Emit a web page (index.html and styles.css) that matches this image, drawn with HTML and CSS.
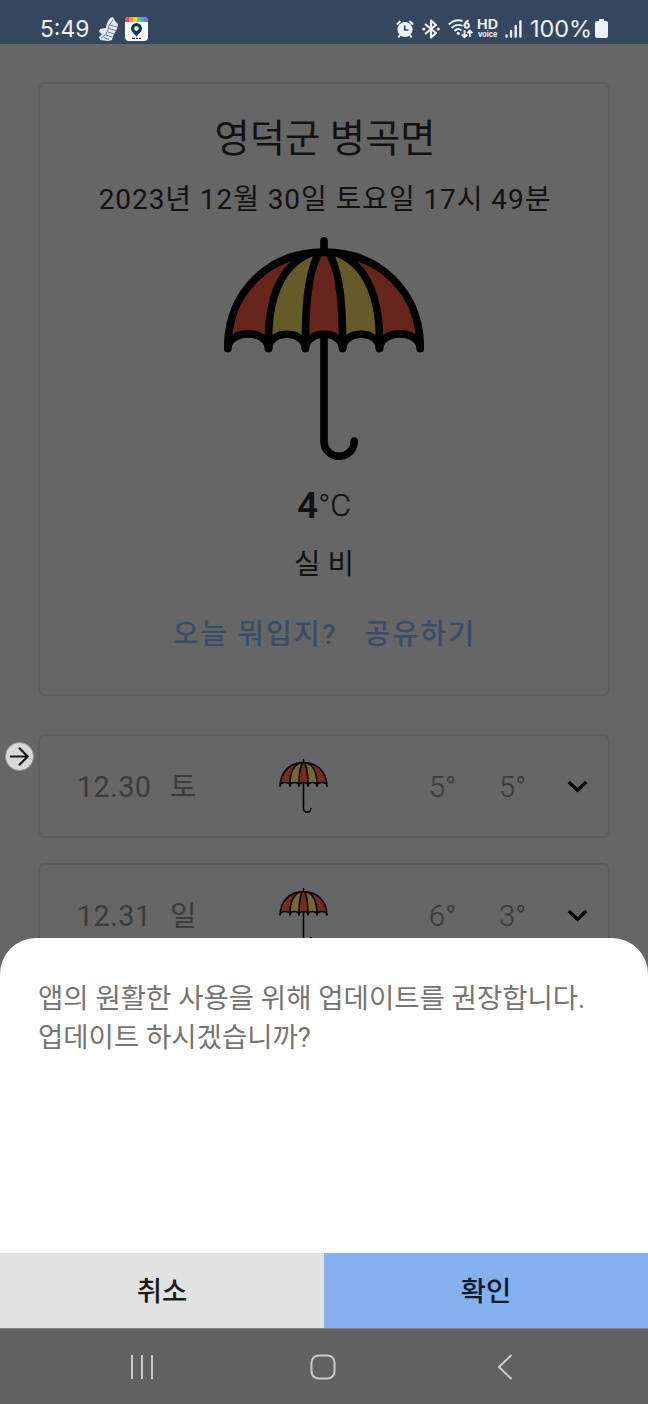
FILE: index.html
```html
<!DOCTYPE html>
<html lang="ko">
<head>
<meta charset="utf-8">
<title>날씨</title>
<link rel="stylesheet" href="styles.css">
</head>
<body>
<svg class="defs" width="0" height="0">
  <symbol id="umbrella" viewBox="71 50 602 670">
    <path class="red" d="M84 345C100 180 220 97 372 97C524 97 644 180 660 345Q600 335 540 350Q484 325 428 350Q372 325 316 350Q260 325 205 350Q145 320 84 345Z"/>
    <path class="yellow" d="M205 350C205 230 240 145 330 103L350 108C325 170 316 250 316 350Q260 325 205 350Z"/>
    <path class="yellow" d="M539 350C539 230 504 145 414 103L394 108C419 170 428 250 428 350Q484 325 539 350Z"/>
    <path class="stroke" d="M372 61V96M82 385C82 215 205 95 372 95S662 215 662 385M205 385C201 240 240 140 325 101M316 385C316 250 324 160 354 103M428 385C428 250 420 160 390 103M539 385C543 240 504 140 419 101"/>
    <path class="stroke" d="M82 385C85 328 201 325 205 385C207 328 313 328 316 385C319 328 425 328 428 385C431 328 537 328 539 385C543 325 659 328 662 385M372 345V664A45 45 0 0 0 463 664"/>
  </symbol>
  <symbol id="chevron" viewBox="0 0 20 13"><path d="M1.200 2 10 10.200 18.800 2" fill="none" stroke="#000" stroke-width="3.300"/></symbol>
</svg>
<div class="screen">
  <header class="status">
    <div class="status-left">
      <span class="clock">5:49</span>
      <svg class="shoe" viewBox="0 0 19 24"><path d="M11 1 14 0 16 4 19 7 18 12 14 19 13 23 9 24 1 23 0 20 3 17 0 15 1 12 7 11 8 6Z" fill="#e4eaf2"/><path d="M14 3Q9 8 9 13Q8 18 2 21M11 8 18 10M10 11.500 17 13.500M9 15 15 17M7 18 13 20M5 20.500 10 22.500" fill="none" stroke="#6b7a90" stroke-width="1"/></svg>
      <svg class="app" viewBox="0 0 23 24"><rect width="23" height="24" rx="4" fill="#fbfcfd"/><path d="M0 5V4Q0 0 4 0H5V5Z" fill="#e7514b"/><path d="M4 0H8V5H4Z" fill="#f6914d"/><path d="M8 0H12V5H8Z" fill="#e9d34f"/><path d="M12 0H16V5H12Z" fill="#62c97b"/><path d="M16 0H19V5H16Z" fill="#5899ec"/><path d="M19 0Q23 0 23 4V5H19Z" fill="#8d70e8"/><path d="M11.500 19.500 7.300 15A5.500 5.500 0 1 1 15.700 15Z" fill="#123a56"/><circle cx="11.500" cy="11.500" r="2.200" fill="#fff"/><path d="M7 21.300H10M11 21.300H13M14 21.300H16" stroke="#333" stroke-width="1.300"/></svg>
    </div>
    <div class="status-right">
      <svg class="alarm" viewBox="0 0 18 18"><circle cx="9" cy="9.500" r="7.600" fill="#edf2f8"/><path d="M.8 4.700 4.500 1M17.200 4.700 13.500 1M4 15 2.300 17.500M14 15 15.700 17.500" stroke="#edf2f8" stroke-width="2" fill="none"/><path d="M8.700 5.500V10H12.500" stroke="#35475f" stroke-width="1.600" fill="none"/></svg>
      <svg class="bluetooth" viewBox="0 0 18 20"><path d="M3 5 14 14 9 18.500V1.500L14 6 3 15" fill="none" stroke="#edf2f8" stroke-width="2.200" stroke-linejoin="round"/><circle cx="1.800" cy="10" r="1.600" fill="#edf2f8"/><circle cx="16.200" cy="10" r="1.600" fill="#edf2f8"/></svg>
      <svg class="wifi" viewBox="0 0 25 20"><g fill="none" stroke="#edf2f8" stroke-width="1.900"><path d="M.8 5.500Q7.500-.5 14.500 2M3.500 9Q9 4 14.500 7M6.500 12Q10 8.500 13.500 11.500"/><path d="M20.500 1.500Q16.500 3 16.500 7"/><circle cx="18.700" cy="6.500" r="2.200"/><path d="M16.500 11V18M13.800 15.500 16.500 18.200 19.200 15.500M21.800 18V12M19.200 14.200 21.800 11.500 24.400 14.200"/></g><circle cx="10.300" cy="14.300" r="1.600" fill="#edf2f8"/></svg>
      <svg class="hd" viewBox="0 0 22 20"><text class="hd-top" x="0" y="10" textLength="21" lengthAdjust="spacingAndGlyphs">HD</text><text class="hd-sub" x="1" y="17.800" textLength="19.500" lengthAdjust="spacingAndGlyphs">voice</text></svg>
      <svg class="signal" viewBox="0 0 17 18"><path d="M1.500 15.500V16.500M6 11V16.500M10.700 6V16.500M15.400 1.200V16.500" stroke="#edf2f8" stroke-width="2.400" stroke-linecap="round"/></svg>
      <span class="percent">100%</span>
      <svg class="battery" viewBox="0 0 13 19"><path d="M4 0H9V2H11Q13 2 13 4V17Q13 19 11 19H2Q0 19 0 17V4Q0 2 2 2H4Z" fill="#edf2f8"/></svg>
    </div>
  </header>
  <main class="content">
    <section class="card today">
      <h1 class="place">영덕군 병곡면</h1>
      <p class="date">2023년 12월 30일 토요일 17시 49분</p>
      <svg class="hero"><use href="#umbrella"/></svg>
      <p class="temp"><b>4</b><span>°C</span></p>
      <p class="cond">실 비</p>
      <div class="links"><span>오늘 뭐입지?</span><span>공유하기</span></div>
    </section>
    <section class="card day">
      <span class="md">12.30</span><span class="wd">토</span>
      <svg class="mini"><use href="#umbrella"/></svg>
      <span class="low">5°</span><span class="high">5°</span>
      <svg class="chev"><use href="#chevron"/></svg>
    </section>
    <section class="card day">
      <span class="md">12.31</span><span class="wd">일</span>
      <svg class="mini"><use href="#umbrella"/></svg>
      <span class="low">6°</span><span class="high">3°</span>
      <svg class="chev"><use href="#chevron"/></svg>
    </section>
  </main>
  <div class="handle"><svg viewBox="0 0 28 28"><path d="M4 14H22.500M13.500 5 22.500 14 13.500 23" fill="none" stroke="#1b1b1d" stroke-width="2.300"/></svg></div>
  <div class="sheet">
    <p class="message">앱의 원활한 사용을 위해 업데이트를 권장합니다.<br>업데이트 하시겠습니까?</p>
    <div class="actions"><div class="btn cancel">취소</div><div class="btn ok">확인</div></div>
    <nav class="nav">
      <svg class="recent" viewBox="0 0 24 26"><path d="M2 1V25M12 1V25M22 1V25" stroke="#cbcbcb" stroke-width="2"/></svg>
      <svg class="home" viewBox="0 0 26 26"><rect x="1.500" y="1.500" width="23" height="23" rx="7" fill="none" stroke="#cbcbcb" stroke-width="2"/></svg>
      <svg class="back" viewBox="0 0 16 26"><path d="M14.500 1 2 13 14.500 25" fill="none" stroke="#cbcbcb" stroke-width="2"/></svg>
    </nav>
  </div>
</div>
</body>
</html>
```
FILE: styles.css
```css
* { box-sizing: border-box; margin: 0; padding: 0; }
body { background: #666; font-family: Roboto, "Noto Sans CJK KR", sans-serif; }
svg { display: block; flex: none; }
.defs { position: absolute; }
.red { fill: var(--red, #68251c); }
.yellow { fill: var(--yellow, #655b2a); }
.stroke { fill: none; stroke: #000; stroke-width: var(--line, 23); stroke-linecap: round; stroke-linejoin: round; }
.screen { position: relative; width: 648px; height: 1404px; overflow: hidden; background: #666; }

.status { height: 44px; background: #35475f; display: flex; justify-content: space-between; padding: 13px 40px 0 40px; color: #edf2f8; font-family: Inter, sans-serif; }
.status-left, .status-right { display: flex; align-items: center; height: 31px; }
.clock { font-size: 22.800px; width: 59px; white-space: nowrap; }
.shoe { width: 19px; height: 24px; }
.app { width: 23px; height: 24px; margin-left: 7px; }
.alarm { width: 18px; height: 18px; }
.bluetooth { width: 18px; height: 20px; margin-left: 8px; }
.wifi { width: 25px; height: 20px; margin-left: 8px; }
.hd { width: 22px; height: 20px; margin-left: 4px; fill: #edf2f8; font-weight: 700; overflow: visible; }
.hd-top { font-size: 12.500px; }
.hd-sub { font-size: 8px; }
.signal { width: 17px; height: 18px; margin-left: 6px; }
.percent { width: 65px; font-size: 23.500px; letter-spacing: -.1px; margin-left: 8px; white-space: nowrap; }
.battery { width: 13px; height: 19px; }

.content { padding: 38px 38px 0; display: flex; flex-direction: column; }
.card { border: 2px solid #5d5d5d; border-radius: 7px; }
.today { height: 614px; display: flex; flex-direction: column; align-items: center; color: #121212; }
.place { font-size: 38.300px; font-weight: 400; line-height: 50px; margin-top: 30px; padding-left: 2px; }
.date { font-size: 28px; line-height: 40px; margin-top: 16px; padding-left: 2px; letter-spacing: .92px; white-space: nowrap; }
.hero { width: 200px; height: 223px; margin-top: 17px; }
.temp { display: flex; align-items: center; height: 44px; margin-top: 23px; font-size: 32px; font-weight: 300; -webkit-text-stroke: .25px #121212; }
.temp b { font-size: 37px; font-weight: 600; -webkit-text-stroke: 0; }
.cond { font-size: 28.800px; line-height: 40px; margin-top: 17px; }
.links { display: flex; gap: 26.500px; margin-top: 31px; padding-left: 1px; font-size: 28.300px; line-height: 40px; font-weight: 500; letter-spacing: 2px; color: #394d68; white-space: nowrap; }

.day { height: 104px; margin-top: 38px; padding: 0 18px 0 37px; display: flex; align-items: center; font-size: 28.800px; color: #3b3b3b; }
.day + .day { margin-top: 25px; }
.md { width: 93px; letter-spacing: .4px; padding-top: 1px; }
.wd { width: 109px; line-height: 40px; padding-top: 2px; }
.mini { width: 49px; height: 54px; --red: #7a2b20; --yellow: #75692f; --line: 20; }
.low { width: 70px; margin-left: 101px; }
.high { width: 68px; }
.low, .high { padding-top: 1px; letter-spacing: .3px; font-weight: 300; -webkit-text-stroke: .25px #3b3b3b; }
.chev { width: 21px; height: 13px; }

.handle { position: absolute; left: 5px; top: 742px; width: 29px; height: 29px; border-radius: 50%; background: #d8d8d8; border: 1px solid #999; }
.handle svg { width: 27px; height: 27px; }
.sheet { position: absolute; left: 0; top: 938px; width: 648px; height: 466px; background: #fff; border-radius: 36px 36px 0 0; display: flex; flex-direction: column; overflow: hidden; }
.message { flex: 1; padding: 41px 38px 0; font-size: 27.500px; line-height: 39px; color: #747474; white-space: nowrap; }
.actions { display: flex; height: 75px; }
.btn { flex: 1; display: flex; align-items: center; justify-content: center; padding-bottom: 3px; font-size: 27.500px; font-weight: 500; }
.cancel { background: #e2e2e2; color: #1b1b1b; }
.ok { background: #84b0ec; color: #0e1b2d; }
.nav { height: 76px; background: #616161; border-top: 1px solid #858585; display: flex; align-items: center; padding: 1px 134px 0 130px; }
.recent { width: 24px; height: 26px; }
.home { width: 26px; height: 26px; margin-left: 156px; }
.back { width: 16px; height: 26px; margin-left: 161px; }
```
